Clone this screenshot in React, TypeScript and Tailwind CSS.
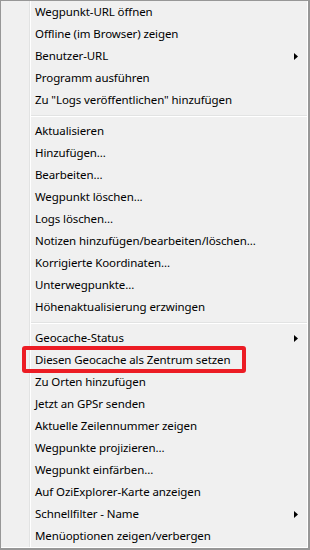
import React from 'react';

type Item = { label: string; sub?: boolean; marked?: boolean };

const GROUPS: Item[][] = [
  [
    { label: 'Wegpunkt-URL öffnen' },
    { label: 'Offline (im Browser) zeigen' },
    { label: 'Benutzer-URL', sub: true },
    { label: 'Programm ausführen' },
    { label: 'Zu "Logs veröffentlichen" hinzufügen' },
  ],
  [
    { label: 'Aktualisieren' },
    { label: 'Hinzufügen...' },
    { label: 'Bearbeiten...' },
    { label: 'Wegpunkt löschen...' },
    { label: 'Logs löschen...' },
    { label: 'Notizen hinzufügen/bearbeiten/löschen...' },
    { label: 'Korrigierte Koordinaten...' },
    { label: 'Unterwegpunkte...' },
    { label: 'Höhenaktualisierung erzwingen' },
  ],
  [
    { label: 'Geocache-Status', sub: true },
    { label: 'Diesen Geocache als Zentrum setzen', marked: true },
    { label: 'Zu Orten hinzufügen' },
    { label: 'Jetzt an GPSr senden' },
    { label: 'Aktuelle Zeilennummer zeigen' },
    { label: 'Wegpunkte projizieren...' },
    { label: 'Wegpunkt einfärben...' },
    { label: 'Auf OziExplorer-Karte anzeigen' },
    { label: 'Schnellfilter - Name', sub: true },
    { label: 'Menüoptionen zeigen/verbergen' },
  ],
];

function Arrow() {
  return (
    <svg width="4" height="7" viewBox="0 0 4 7" className="shrink-0">
      <path d="M0 0 L4 3.5 L0 7 Z" fill="#000" />
    </svg>
  );
}

function MenuRow({ item }: { item: Item }) {
  return (
    <div className="relative flex h-[22px] items-center justify-between pl-[4px] pr-[9px]">
      <span className="whitespace-nowrap">{item.label}</span>
      {item.sub && <Arrow />}
      {item.marked && (
        <div className="absolute left-[-9px] top-[-3px] h-[27px] w-[224px] rounded-[3px] border-[4px] border-[#ec1c24]" />
      )}
    </div>
  );
}

export default function App() {
  return (
    <div
      className="h-[550px] w-[310px] border-l border-t border-r-2 border-b-2 border-[#979797] bg-[#f0f0f0] text-[11.5px] tracking-[-0.1px] text-black"
      style={{ fontFamily: '"Noto Sans", "Open Sans", sans-serif' }}
    >
      <div className="flex h-full border-r border-b border-white">
        {/* icon gutter */}
        <div className="w-[29px] shrink-0 border-r border-[#e2e3e3]" />
        <div className="flex-1 border-l border-white">
          {GROUPS.map((group, gi) => (
            <div key={gi}>
              {gi > 0 && (
                <div className="flex h-[9px] flex-col justify-center">
                  <div className="h-px bg-[#e2e3e3]" />
                  <div className="h-px bg-white" />
                </div>
              )}
              {group.map(item => (
                <MenuRow key={item.label} item={item} />
              ))}
            </div>
          ))}
        </div>
      </div>
    </div>
  );
}
